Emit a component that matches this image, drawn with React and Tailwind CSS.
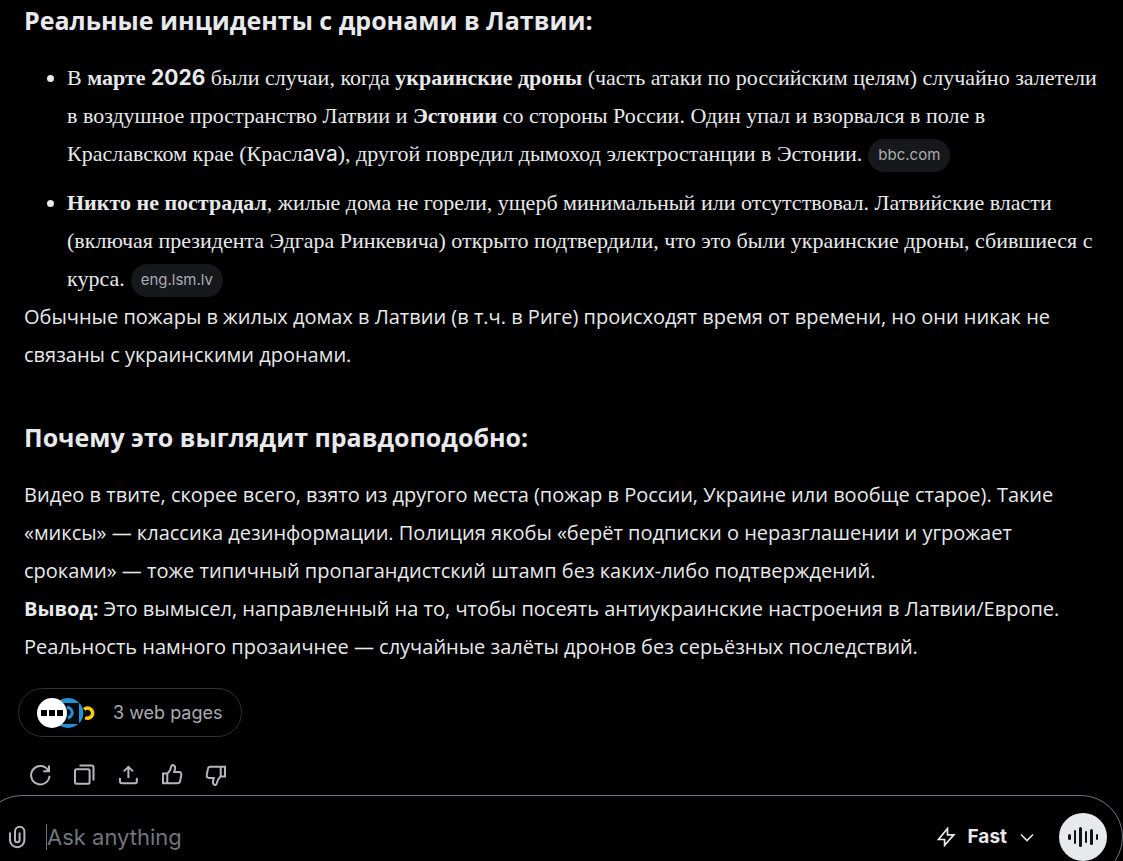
import { useState } from "react"

const iconProps = {
  viewBox: "0 0 24 24",
  fill: "none",
  stroke: "currentColor",
  strokeWidth: 2,
  "aria-hidden": true,
}

const RefreshIcon = () => (
  <svg {...iconProps} className="size-6">
    <path d="M20.4 7.8A9.2 9.2 0 1 0 21.5 12.7" />
    <path d="M21 2.5v5.8h-5.8" />
  </svg>
)

const CopyIcon = () => (
  <svg {...iconProps} className="size-6">
    <rect x="3" y="6.2" width="14.6" height="14.6" rx="1.5" />
    <path d="M7.5 2.6H19.5a2 2 0 0 1 2 2V17.5" />
  </svg>
)

const ShareIcon = () => (
  <svg {...iconProps} className="size-6">
    <path d="M12.4 15V4M7.8 8.4l4.6-4.6L17 8.4" />
    <path d="M4 15v3.6a1.6 1.6 0 0 0 1.6 1.6h13.6a1.6 1.6 0 0 0 1.6-1.6V15" />
  </svg>
)

const ThumbIcon = ({ className }) => (
  <svg {...iconProps} className={className}>
    <path d="M3 10.5h4.5c2-1.7 3.3-4.3 3.9-7.3.3-1.2 1.2-1.5 2-1.1 1.4.6 1.9 2 1.6 3.6l-.8 3.3h4.9c1.5 0 2.5 1.2 2.2 2.6l-1.2 6.5c-.2 1.3-1.2 2.1-2.5 2.1H3zM7.3 10.5v9.6" />
  </svg>
)

const PaperclipIcon = () => (
  <svg {...iconProps} className="h-6 w-4.5" viewBox="0 0 18 24">
    <path d="M2 7.5v7.5a7.2 7.2 0 0 0 14.4 0V6.5a4.7 4.7 0 0 0-9.4 0V15a2.3 2.3 0 0 0 4.6 0V7.5" />
  </svg>
)

const BoltIcon = () => (
  <svg {...iconProps} className="size-5" viewBox="0 0 20 20" strokeWidth={1.7}>
    <path d="M11.5 1.5 2.5 12.5H8.6V18.3L17.8 7.8H11.5z" />
  </svg>
)

const ChevronIcon = () => (
  <svg {...iconProps} className="size-4" viewBox="0 0 16 16" strokeWidth={1.6}>
    <path d="m2 5.5 6 6 6-6" />
  </svg>
)

const VoiceIcon = () => (
  <svg viewBox="0 0 32 24" className="h-6 w-8" fill="currentColor" aria-hidden="true">
    <rect x="1" y="9" width="3" height="6" rx="1.5" />
    <rect x="7" y="5" width="2" height="14" rx="1" />
    <rect x="12" y="2" width="3" height="20" rx="1.5" />
    <rect x="18" y="6" width="2" height="12" rx="1" />
    <rect x="23" y="4" width="3" height="16" rx="1.5" />
    <rect x="29" y="9" width="2" height="6" rx="1" />
  </svg>
)

// Overlapping favicons of the cited sites, first one on top
const SourceIcons = () => (
  <svg viewBox="0 0 60 30" className="h-[30px] w-15" aria-hidden="true">
    <path d="M47.2 11.5a5 5 0 1 1 1 8" fill="none" stroke="#fecb08" strokeWidth="3.6" />
    <circle cx="31" cy="15" r="15" fill="#2490d8" />
    <path d="M22 5h20v21H22z" fill="#05080c" />
    <path d="M30 9q5 1.5 5.3 6-.5 3.5-4.3 5" fill="none" stroke="#2490d8" strokeWidth="3" />
    <path d="M42.5 5a15 15 0 0 1 0 20z" fill="#2490d8" />
    <circle cx="15" cy="15" r="15" fill="#fff" />
    <path d="M4 12h6v6H4zM12 12h6v6h-6zM20 12h6v6h-6z" fill="#000" />
  </svg>
)

const Source = ({ href, children }) => (
  <a
    href={href}
    className="ml-1.5 inline-flex h-[33px] items-center rounded-full bg-[#16181c] px-2.5 align-[1px] font-['Inter',sans-serif] text-[15px] leading-5 text-[#a9adb2]"
  >
    {children}
  </a>
)

const actions = [
  { label: "Regenerate", icon: <RefreshIcon /> },
  { label: "Copy", icon: <CopyIcon /> },
  { label: "Share", icon: <ShareIcon /> },
  { label: "Like", icon: <ThumbIcon className="size-6" /> },
  { label: "Dislike", icon: <ThumbIcon className="size-6 rotate-180" /> },
]

export default function App() {
  const [message, setMessage] = useState("")

  return (
    <div className="flex h-screen flex-col overflow-hidden bg-black font-['Open_Sans',sans-serif] text-[#e7e9ea]">
      <main className="min-h-0 flex-1 pr-4 pl-6">
        <h2 className="text-[25px] leading-10 font-bold">Реальные инциденты с дронами в Латвии:</h2>

        <ul className="mt-[19px] list-disc space-y-[11px] pl-[43px] font-['Liberation_Serif',serif] text-[22px] leading-[38px]">
          <li>
            В <b>марте <span className="font-['Inter',sans-serif] text-[21px]">2026</span></b> были случаи, когда{" "}
            <b>украинские дроны</b> (часть атаки по российским целям) случайно залетели в воздушное пространство Латвии
            и <b>Эстонии</b> со стороны России. Один упал и взорвался в поле в Краславском крае (Красл
            <span className="font-['Inter',sans-serif] text-[21px]">ava</span>), другой повредил дымоход электростанции
            в Эстонии.
            <Source href="https://bbc.com">bbc.com</Source>
          </li>
          <li>
            <b>Никто не пострадал</b>, жилые дома не горели, ущерб минимальный или отсутствовал. Латвийские власти
            (включая президента Эдгара Ринкевича) открыто подтвердили, что это были украинские дроны, сбившиеся с курса.
            <Source href="https://eng.lsm.lv">eng.lsm.lv</Source>
          </li>
        </ul>
        <p className="text-[20px] leading-[38px]">
          Обычные пожары в жилых домах в Латвии (в т.ч. в Риге) происходят время от времени, но они никак не связаны с
          украинскими дронами.
        </p>

        <h2 className="mt-[43px] text-[25px] leading-10 font-bold">Почему это выглядит правдоподобно:</h2>

        <div className="mt-[19px] text-[20px] leading-[38px]">
          <p>
            Видео в твите, скорее всего, взято из другого места (пожар в России, Украине или вообще старое). Такие
            «миксы» — классика дезинформации. Полиция якобы «берёт подписки о неразглашении и угрожает сроками» — тоже
            типичный пропагандистский штамп без каких-либо подтверждений.
          </p>
          <p>
            <b>Вывод:</b> Это вымысел, направленный на то, чтобы посеять антиукраинские настроения в Латвии/Европе.
            Реальность намного прозаичнее — случайные залёты дронов без серьёзных последствий.
          </p>
        </div>

        <button className="mt-5.5 -ml-1.5 flex h-[49px] items-center gap-4 rounded-full border border-[#2f3336] px-4.5 font-['Inter',sans-serif] text-[18px] text-[#a9adb2]">
          <SourceIcons />
          3 web pages
        </button>

        <div className="mt-4 -ml-1.5 flex text-[#b4b7ba]">
          {actions.map((action) => (
            <button key={action.label} aria-label={action.label} className="flex size-11 items-center justify-center">
              {action.icon}
            </button>
          ))}
        </div>
      </main>

      <form className="-mb-[18px] -ml-5 flex h-21 shrink-0 items-center rounded-full border border-[#71767b] pr-[15px] pl-[27px] font-['Inter',sans-serif]">
        <button type="button" aria-label="Attach" className="text-[#b4b7ba]">
          <PaperclipIcon />
        </button>
        <input
          aria-label="Ask anything"
          value={message}
          onChange={(e) => setMessage(e.target.value)}
          placeholder="Ask anything"
          className="ml-5 h-[26px] min-w-0 flex-1 border-l border-[#71767b] bg-transparent text-[22px] outline-none placeholder:text-[#71767b]"
        />
        <button type="button" className="flex items-center gap-3 text-[19px] font-bold">
          <BoltIcon /> Fast <ChevronIcon />
        </button>
        <button
          type="button"
          aria-label="Voice"
          className="ml-6 flex size-12 items-center justify-center rounded-full bg-[#e7e9ea] text-[#0f1419]"
        >
          <VoiceIcon />
        </button>
      </form>
    </div>
  )
}
